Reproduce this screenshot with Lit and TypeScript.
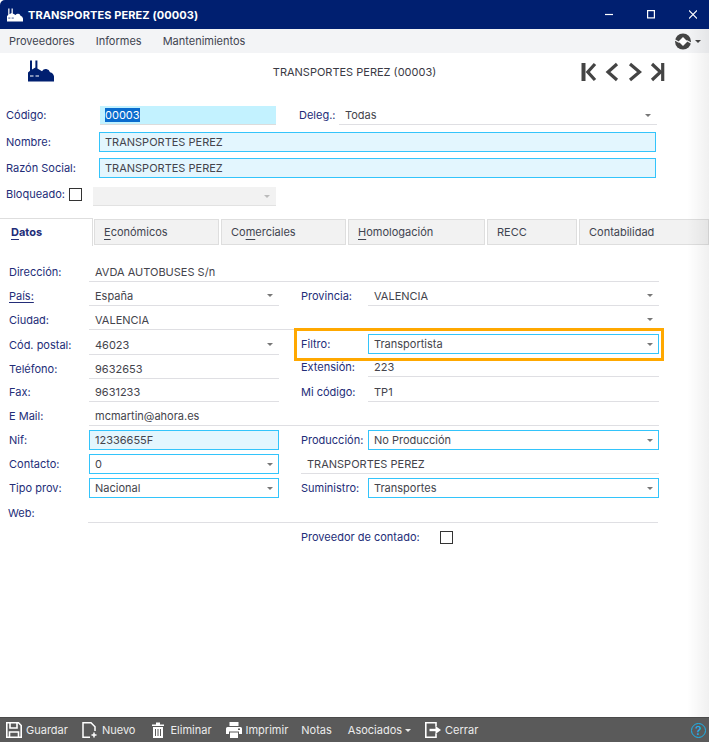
import { LitElement, html, css, svg } from 'lit';
import { customElement } from 'lit/decorators.js';

const factory = (color: string, cut: string) => svg`
  <path fill=${color} d="M0 21.5V12.5L2 10.8V0.5H4V9.6L7.4 7.6V0.5H9.4V8.4L14 11.2A4.4 4.4 0 0 1 22 12.2Q25.5 13 26 16.5V21.5Z"/>
  <path fill="none" stroke=${cut} stroke-width="1.2" d="M2 16H5.5M7.5 16H11"/>
`;

@customElement('app-root')
export class AppRoot extends LitElement {
  static styles = css`
    :host {
      display: flex;
      flex-direction: column;
      position: relative;
      height: 742px;
      width: 709px;
      overflow: hidden;
      background: #fff;
      font-family: Inter, 'Liberation Sans', sans-serif;
      font-size: 11px;
      color: #44444c;
    }
    svg {
      display: block;
      flex: none;
    }
    .titlebar {
      height: 29px;
      flex: none;
      display: flex;
      align-items: center;
      padding-left: 7px;
      background: #001f70;
      border-top-left-radius: 5px;
      color: #fff;
      font-weight: 700;
      letter-spacing: 0.1px;
    }
    .titlebar .name {
      margin-left: 5px;
      flex: 1;
    }
    .controls {
      display: flex;
      gap: 34px;
      padding-right: 12px;
    }
    .menubar {
      height: 24px;
      flex: none;
      display: flex;
      align-items: center;
      padding: 0 8px 0 9px;
      background: #f3f4f6;
      color: #3f4450;
    }
    .menubar .item {
      margin-right: 21px;
    }
    .menubar .options {
      margin-left: auto;
      display: flex;
      align-items: center;
      gap: 4px;
    }
    .head {
      height: 53px;
      flex: none;
      display: grid;
      grid-template-columns: 28px 26px 1fr;
      position: relative;
    }
    .logo {
      grid-column: 2;
      margin-top: 7px;
    }
    .caption {
      position: absolute;
      left: 0;
      right: 0;
      top: 12px;
      text-align: center;
      color: #3a3a44;
    }
    .nav {
      position: absolute;
      left: 581px;
      top: 9px;
    }
    .top {
      flex: none;
      display: grid;
      grid-template-columns: 93px 177px 23px 40px 318px;
      grid-template-rows: 26px 26px 29px 19px;
      padding-left: 6px;
    }
    .label {
      color: #232d78;
      line-height: 18px;
      white-space: nowrap;
    }
    .top .tall {
      line-height: 20px;
    }
    .code {
      height: 18px;
      margin-left: 1px;
      padding-left: 5px;
      display: flex;
      align-items: center;
      background: #c3f2ff;
      border-bottom: 1px solid #dcdcdc;
    }
    .code span {
      background: #0a6cce;
      color: #fff;
      line-height: 14px;
    }
    .field {
      height: 20px;
      box-sizing: border-box;
      display: flex;
      align-items: center;
      justify-content: space-between;
      padding: 0 6px;
      border-bottom: 1px solid #dfdfe3;
      white-space: nowrap;
    }
    .field.top-line {
      height: 19px;
    }
    .field.req {
      border: 1px solid #33c4fb;
      padding: 0 5px;
    }
    .field.fill {
      background: #e3f6fe;
    }
    .wide {
      grid-column: 2 / -1;
      margin-right: 1px;
    }
    .blocked {
      grid-column: 1 / -1;
      display: flex;
      align-items: flex-start;
    }
    .blocked .label {
      line-height: 15px;
    }
    .blocked .check {
      margin: 1px 11px 0 4px;
    }
    .blocked .field {
      width: 183px;
      height: 19px;
      background: #f2f2f2;
      border-bottom-color: #e2e2e2;
    }
    .blocked .caret {
      border-top-color: #bbb;
    }
    .check {
      width: 13px;
      height: 13px;
      box-sizing: border-box;
      border: 1px solid #333;
      background: #fff;
      flex: none;
    }
    .caret {
      width: 0;
      height: 0;
      border-left: 3px solid transparent;
      border-right: 3px solid transparent;
      border-top: 3px solid #777;
      flex: none;
    }
    .tabs {
      flex: none;
      display: flex;
      align-items: flex-end;
      gap: 2px;
      height: 27px;
      margin-top: 12px;
    }
    .tab {
      height: 26px;
      box-sizing: border-box;
      padding-left: 9px;
      line-height: 25px;
      background: #f2f2f2;
      border: 1px solid #dedede;
      color: #3f4450;
      white-space: nowrap;
    }
    .tab u {
      text-underline-offset: 3px;
    }
    .tab.active {
      height: 28px;
      margin: 0 -1px -1px 0;
      padding-left: 11px;
      line-height: 27px;
      background: #fff;
      border: 0;
      border-top: 1px solid #dedede;
      border-right: 1px solid #dedede;
      color: #232d78;
      font-weight: 700;
    }
    .form {
      position: relative;
      flex: 1;
      display: grid;
      grid-template-columns: 80px 190px 22px 67px 291px;
      grid-template-rows: 24px 24px 25px 24px 23px 24px 24px 24px 24px 25px 24px;
      align-content: start;
      padding: 17px 0 0 9px;
    }
    .form .label {
      line-height: 20px;
    }
    .form .span {
      grid-column: 2 / -1;
    }
    .form .rspan {
      grid-column: 3 / -1;
      margin-left: 22px;
    }
    .form .web {
      margin-left: -1px;
      margin-right: 1px;
    }
    .web-label {
      margin-left: -1px;
    }
    .up1 {
      margin-top: -1px;
    }
    .up2 {
      margin-top: -2px;
    }
    .pais {
      justify-self: start;
      text-decoration: underline;
      text-underline-offset: 2px;
    }
    .contado {
      grid-column: 4 / -1;
      display: flex;
      align-items: center;
      gap: 20px;
      height: 20px;
    }
    .highlight {
      position: absolute;
      left: 294px;
      top: 83px;
      width: 370px;
      height: 33px;
      box-sizing: border-box;
      border: 3px solid #ffa800;
      pointer-events: none;
    }
    .footer {
      height: 25px;
      flex: none;
      box-sizing: border-box;
      display: flex;
      align-items: center;
      padding-left: 6px;
      background: #5a5a5a;
      border-top: 1px solid #4a4a4a;
      color: #ececec;
    }
    .btn {
      display: flex;
      align-items: center;
      gap: 4px;
      white-space: nowrap;
    }
    .btn .caret {
      border-top-color: #ececec;
      margin-left: -1px;
    }
    .help {
      margin-left: auto;
      margin-right: 3px;
      width: 15px;
      height: 15px;
      box-sizing: border-box;
      border: 1.5px solid #1cb4ee;
      border-radius: 50%;
      color: #1cb4ee;
      font-size: 12px;
      font-weight: 500;
      line-height: 13px;
      text-align: center;
    }
    .shade {
      position: absolute;
      top: 29px;
      right: 0;
      bottom: 25px;
      width: 22px;
      background: linear-gradient(to right, rgba(0, 0, 0, 0), rgba(0, 0, 0, 0.06));
      pointer-events: none;
    }
  `;

  private field(value: string, mods = '', caret = false) {
    return html`<div class="field ${mods}">
      <span>${value}</span>${caret ? html`<i class="caret"></i>` : ''}
    </div>`;
  }

  render() {
    return html`
      <div class="titlebar">
        <svg width="16" height="14" viewBox="0 0 26 22">${factory('#fff', '#001f70')}</svg>
        <span class="name">TRANSPORTES PEREZ (00003)</span>
        <div class="controls">
          <svg width="8" height="9" viewBox="0 0 8 9"><path stroke="#fff" stroke-width="1.2" d="M0 4.5H8"/></svg>
          <svg width="8" height="9" viewBox="0 0 8 9"><rect x=".6" y=".6" width="6.8" height="7.3" fill="none" stroke="#fff" stroke-width="1.2"/></svg>
          <svg width="8" height="9" viewBox="0 0 8 9"><path stroke="#fff" stroke-width="1.1" d="M0 .5L8 8.5M8 .5L0 8.5"/></svg>
        </div>
      </div>

      <div class="menubar">
        <span class="item">Proveedores</span>
        <span class="item">Informes</span>
        <span class="item">Mantenimientos</span>
        <div class="options">
          <svg width="16" height="17" viewBox="0 0 16 17">
            <path fill="#444" d="M8 .5A8 8 0 0 1 8 16.5A8 8 0 0 1 8 .5Z"/>
            <path fill="#fff" d="M8 4L12.5 8.5 8 13 3.5 8.5Z"/>
            <path stroke="#f3f4f6" stroke-width="1.2" d="M0 7L4.5 9.5M16 10L11.5 7.5"/>
          </svg>
          <i class="caret" style="border-top-color:#444"></i>
        </div>
      </div>

      <div class="head">
        <svg class="logo" width="26" height="22" viewBox="0 0 26 22">${factory('#001f70', '#fff')}</svg>
        <div class="caption">TRANSPORTES PEREZ (00003)</div>
        <svg class="nav" width="84" height="20" viewBox="0 0 84 20">
          <g fill="none" stroke="#444" stroke-width="3.2">
            <path d="M2.5 1V19" stroke-width="4"/>
            <path d="M14 2L6.8 10 14 18"/>
            <path d="M36 2L27 10 36 18"/>
            <path d="M49 2L58.5 10 49 18"/>
            <path d="M71 2L79.5 10 71 18"/>
            <path d="M81.7 1V19"/>
          </g>
        </svg>
      </div>

      <div class="top">
        <span class="label">Código:</span>
        <div class="code"><span>00003</span></div>
        <span></span>
        <span class="label">Deleg.:</span>
        ${this.field('Todas', 'top-line', true)}

        <span class="label tall">Nombre:</span>
        ${this.field('TRANSPORTES PEREZ', 'req fill wide')}

        <span class="label tall">Razón Social:</span>
        ${this.field('TRANSPORTES PEREZ', 'req fill wide')}

        <div class="blocked">
          <span class="label">Bloqueado:</span>
          <i class="check"></i>
          <div class="field"><span></span><i class="caret"></i></div>
        </div>
      </div>

      <div class="tabs">
        <div class="tab active" style="width:93px"><u>D</u>atos</div>
        <div class="tab" style="width:125px"><u>E</u>conómicos</div>
        <div class="tab" style="width:125px">Co<u>m</u>erciales</div>
        <div class="tab" style="width:137px"><u>H</u>omologación</div>
        <div class="tab" style="width:90px">RECC</div>
        <div class="tab" style="width:130px">Contabilidad</div>
      </div>

      <div class="form">
        <span class="label">Dirección:</span>
        ${this.field('AVDA AUTOBUSES S/n', 'span')}

        <span class="label pais">País:</span>
        ${this.field('España', '', true)}
        <span></span>
        <span class="label">Provincia:</span>
        ${this.field('VALENCIA', '', true)}

        <span class="label">Ciudad:</span>
        ${this.field('VALENCIA', 'span', true)}

        <span class="label">Cód. postal:</span>
        ${this.field('46023', '', true)}
        <span></span>
        <span class="label up1">Filtro:</span>
        ${this.field('Transportista', 'req up1', true)}

        <span class="label">Teléfono:</span>
        ${this.field('9632653')}
        <span></span>
        <span class="label up2">Extensión:</span>
        ${this.field('223', 'up2')}

        <span class="label">Fax:</span>
        ${this.field('9631233')}
        <span></span>
        <span class="label">Mi código:</span>
        ${this.field('TP1')}

        <span class="label">E Mail:</span>
        ${this.field('mcmartin@ahora.es', 'span')}

        <span class="label">Nif:</span>
        ${this.field('12336655F', 'req fill')}
        <span></span>
        <span class="label">Producción:</span>
        ${this.field('No Producción', 'req', true)}

        <span class="label">Contacto:</span>
        ${this.field('0', 'req', true)}
        ${this.field('TRANSPORTES PEREZ', 'rspan')}

        <span class="label">Tipo prov:</span>
        ${this.field('Nacional', 'req', true)}
        <span></span>
        <span class="label">Suministro:</span>
        ${this.field('Transportes', 'req', true)}

        <span class="label web-label">Web:</span>
        ${this.field('', 'span web')}

        <div class="contado">
          <span class="label">Proveedor de contado:</span>
          <i class="check"></i>
        </div>

        <div class="highlight"></div>
      </div>

      <div class="footer">
        <div class="btn" style="margin-right:14px">
          <svg width="16" height="16" viewBox="0 0 16 16" fill="none" stroke="#fff" stroke-width="1.6">
            <path d="M.8.8H12.5L15.2 3.5V15.2H.8Z"/><path d="M4 1V6H11V1M3.5 15V10H12.5V15"/>
          </svg>
          Guardar
        </div>
        <div class="btn" style="margin-right:17px">
          <svg width="16" height="16" viewBox="0 0 16 16" fill="none" stroke="#fff" stroke-width="1.5">
            <path d="M8 15.2H1V.8H9L13 4.8V9"/><path d="M12 10.5V15.5M9.5 13H14.5"/>
          </svg>
          Nuevo
        </div>
        <div class="btn" style="margin-right:14px;gap:6px">
          <svg width="12" height="16" viewBox="0 0 12 16">
            <path fill="#fff" d="M0 2.5H4V.5H8V2.5H12V4H0ZM1 5H11V16H1Z"/>
            <path stroke="#5a5a5a" d="M3.5 7V14M6 7V14M8.5 7V14"/>
          </svg>
          Eliminar
        </div>
        <div class="btn" style="margin-right:13px">
          <svg width="16" height="16" viewBox="0 0 16 16">
            <path fill="#fff" d="M3.5 0H12.5V4H3.5ZM1.5 5H14.5Q16 5 16 6.5V12H13V9.5H3V12H0V6.5Q0 5 1.5 5ZM4 10.5H12V16H4Z"/>
            <path fill="#5a5a5a" d="M12 6.5H14V8H12Z"/>
          </svg>
          Imprimir
        </div>
        <div class="btn" style="margin-right:16px">Notas</div>
        <div class="btn" style="margin-right:14px">Asociados <i class="caret"></i></div>
        <div class="btn">
          <svg width="16" height="16" viewBox="0 0 16 16" fill="none" stroke="#fff" stroke-width="1.6">
            <path d="M11 4.5V.8H.8V15.2H11V11.5"/><path d="M4.5 8H11" stroke-width="2.4"/>
            <path fill="#fff" stroke="none" d="M10.5 4L16 8 10.5 12Z"/>
          </svg>
          Cerrar
        </div>
        <div class="help">?</div>
      </div>

      <div class="shade"></div>
    `;
  }
}
